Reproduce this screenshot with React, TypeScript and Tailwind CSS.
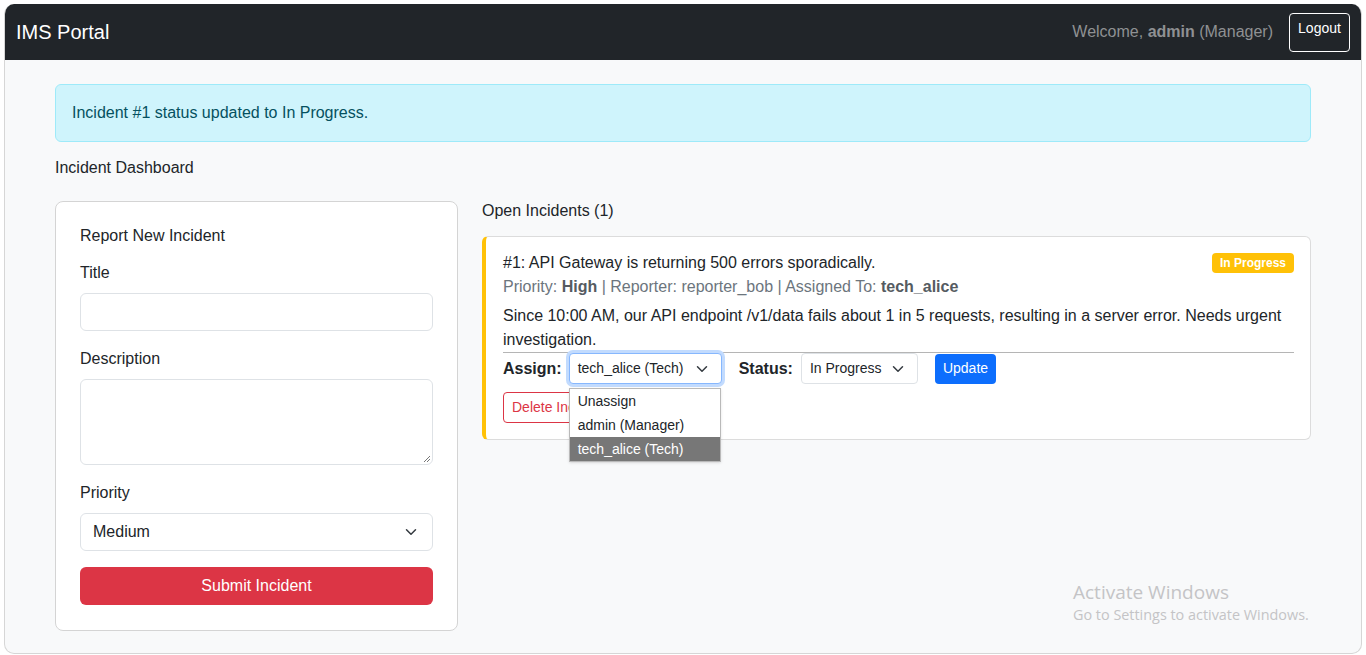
function Chevron({ className = "" }: { className?: string }) {
  return (
    <svg viewBox="0 0 16 16" width="16" height="12" className={className} fill="none">
      <path d="M2 5l6 6 6-6" stroke="#343a40" strokeWidth="2" strokeLinecap="round" strokeLinejoin="round" />
    </svg>
  );
}

function FakeSelect({ value, width, focused }: { value: string; width: string; focused?: boolean }) {
  return (
    <div
      className={`${width} h-[31px] flex items-center justify-between pl-2 pr-[11px] bg-white rounded-[4px] text-[14px] border ${
        focused ? "border-[#86b7fe] ring-[3px] ring-[#c2dbfe]" : "border-[#dee2e6]"
      }`}
    >
      <span>{value}</span>
      <Chevron />
    </div>
  );
}

export default function App() {
  return (
    <div className="min-h-screen bg-white p-1 text-[#212529]" style={{ fontFamily: '"Liberation Sans", Arial, sans-serif' }}>
      <div className="relative h-[650px] rounded-[10px] border border-t-0 border-[#d6d6d6] overflow-hidden bg-[#f8f9fa]">
        {/* navbar */}
        <nav className="h-[56px] bg-[#212529] flex items-center justify-between pl-[11px] pr-[11px]">
          <span className="text-white text-[20px]">IMS Portal</span>
          <div className="flex items-center gap-4">
            <span className="text-[16px] text-[#8f9193]">
              Welcome, <b className="font-bold">admin</b> (Manager)
            </span>
            <button className="h-[39px] w-[61px] border border-white rounded-[4px] text-white text-[14px] flex justify-center pt-[6px] leading-[16px]">
              Logout
            </button>
          </div>
        </nav>

        <main className="px-[50px] pt-6">
          <div className="h-[58px] bg-[#cff4fc] border border-[#9eeaf9] rounded-[6px] text-[#055160] text-[16px] flex items-center px-4">
            Incident #1 status updated to In Progress.
          </div>
          <h2 className="mt-[14px] text-[16px] leading-6">Incident Dashboard</h2>

          <div className="mt-[21px] flex gap-6 items-start">
            {/* left form */}
            <div className="w-[403px] shrink-0 bg-white border border-[#d4d4d4] rounded-[8px] p-6 h-[430px]">
              <h3 className="text-[16px] leading-[20px]">Report New Incident</h3>
              <label className="block mt-[15px] text-[16px] leading-6">Title</label>
              <div className="mt-2 h-[38px] border border-[#dee2e6] rounded-[6px] bg-white" />
              <label className="block mt-4 text-[16px] leading-6">Description</label>
              <div className="relative mt-2 h-[86px] border border-[#dee2e6] rounded-[6px] bg-white">
                <svg className="absolute right-[1px] bottom-[1px]" width="8" height="8" viewBox="0 0 8 8">
                  <path d="M7 1L1 7M7 4L4 7" stroke="#777" strokeWidth="1" />
                </svg>
              </div>
              <label className="block mt-4 text-[16px] leading-6">Priority</label>
              <div className="mt-2 h-[38px] border border-[#dee2e6] rounded-[6px] bg-white flex items-center justify-between pl-3 pr-[13px] text-[16px]">
                <span>Medium</span>
                <Chevron />
              </div>
              <button className="mt-4 w-full h-[38px] bg-[#dc3545] text-white rounded-[6px] text-[16px]">Submit Incident</button>
            </div>

            {/* right column */}
            <div className="flex-1 -mt-[2px]">
              <h3 className="text-[16px] leading-6">Open Incidents (1)</h3>
              <div className="mt-[13px] bg-white border border-[#dcdcdc] border-l-4 border-l-[#ffc107] rounded-[6px] pl-[17px] pr-4 pt-[14px] pb-4">
                <div className="flex justify-between items-start">
                  <div>
                    <div className="text-[16px] leading-6">#1: API Gateway is returning 500 errors sporadically.</div>
                    <div className="text-[16px] leading-6 text-[#6c757d]">
                      Priority: <b className="font-bold text-[#555b61]">High</b> | Reporter: reporter_bob | Assigned To:{" "}
                      <b className="font-bold text-[#555b61]">tech_alice</b>
                    </div>
                  </div>
                  <span className="mt-[2px] bg-[#ffc107] text-white font-bold text-[12px] leading-[20px] px-2 rounded-[4px]">In Progress</span>
                </div>
                <p className="mt-[5px] text-[16px] leading-6">
                  Since 10:00 AM, our API endpoint /v1/data fails about 1 in 5 requests, resulting in a server error. Needs urgent investigation.
                </p>
                <hr className="border-t border-[#b5b5b5]" />
                <div className="flex items-center h-[31px]">
                  <span className="font-bold text-[16px]">Assign:</span>
                  <div className="relative ml-[7px]">
                    <FakeSelect value="tech_alice (Tech)" width="w-[153px]" focused />
                    <ul className="absolute left-0 top-[35px] w-[152px] bg-white border border-[#b9b9b9] text-[14px] z-10 shadow-sm">
                      <li className="h-6 leading-6 px-2">Unassign</li>
                      <li className="h-6 leading-6 px-2">admin (Manager)</li>
                      <li className="h-6 leading-6 px-2 bg-[#777777] text-white">tech_alice (Tech)</li>
                    </ul>
                  </div>
                  <span className="ml-[17px] font-bold text-[16px]">Status:</span>
                  <div className="ml-2">
                    <FakeSelect value="In Progress" width="w-[117px]" />
                  </div>
                  <button className="ml-[17px] h-[30px] px-2 bg-[#0d6efd] text-white text-[14px] rounded-[4px]">Update</button>
                </div>
                <button className="mt-2 h-[31px] px-2 border border-[#dc3545] text-[#dc3545] text-[14px] rounded-[4px]">Delete Incident</button>
              </div>
            </div>
          </div>
        </main>

        {/* windows watermark */}
        <div className="absolute left-[1068px] top-[575px] text-[#c4c4c6] pointer-events-none" style={{ fontFamily: '"Open Sans", "Noto Sans", sans-serif' }}>
          <div className="text-[19px] leading-[26px]">Activate Windows</div>
          <div className="text-[14.4px] leading-[20px]">Go to Settings to activate Windows.</div>
        </div>
      </div>
    </div>
  );
}
